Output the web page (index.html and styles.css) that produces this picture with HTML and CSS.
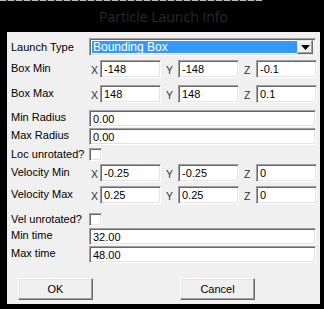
FILE: index.html
```html
<!DOCTYPE html>
<html>
<head>
<meta charset="utf-8">
<link rel="stylesheet" href="styles.css">
</head>
<body>
<div class="screen">
  <div class="topline"></div>
  <div class="title">Particle Launch Info</div>
  <div class="dialog">
    <div class="row r-launch">
      <span class="label">Launch Type</span>
      <div class="combo">
        <span class="combo-sel">Bounding Box</span>
        <span class="combo-btn"><svg width="9" height="5" viewBox="0 0 9 5"><path d="M0 0H9L4.5 5Z" fill="#000"/></svg></span>
      </div>
    </div>
    <div class="row r-boxmin">
      <span class="label">Box Min</span>
      <span class="axis">X</span><span class="field small">-148</span>
      <span class="axis ay">Y</span><span class="field small">-148</span>
      <span class="axis az">Z</span><span class="field small">-0.1</span>
    </div>
    <div class="row r-boxmax">
      <span class="label">Box Max</span>
      <span class="axis">X</span><span class="field small">148</span>
      <span class="axis ay">Y</span><span class="field small">148</span>
      <span class="axis az">Z</span><span class="field small">0.1</span>
    </div>
    <div class="row r-minrad">
      <span class="label">Min Radius</span><span class="field wide">0.00</span>
    </div>
    <div class="row r-maxrad">
      <span class="label">Max Radius</span><span class="field wide">0.00</span>
    </div>
    <div class="row r-loc">
      <span class="label">Loc unrotated?</span><span class="check"></span>
    </div>
    <div class="row r-velmin">
      <span class="label">Velocity Min</span>
      <span class="axis">X</span><span class="field small">-0.25</span>
      <span class="axis ay">Y</span><span class="field small">-0.25</span>
      <span class="axis az">Z</span><span class="field small">0</span>
    </div>
    <div class="row r-velmax">
      <span class="label">Velocity Max</span>
      <span class="axis">X</span><span class="field small">0.25</span>
      <span class="axis ay">Y</span><span class="field small">0.25</span>
      <span class="axis az">Z</span><span class="field small">0</span>
    </div>
    <div class="row r-vel">
      <span class="label">Vel unrotated?</span><span class="check"></span>
    </div>
    <div class="row r-mintime">
      <span class="label">Min time</span><span class="field wide">32.00</span>
    </div>
    <div class="row r-maxtime">
      <span class="label">Max time</span><span class="field wide">48.00</span>
    </div>
    <div class="row r-buttons">
      <span class="btn">OK</span>
      <span class="btn">Cancel</span>
    </div>
  </div>
</div>
</body>
</html>
```
FILE: styles.css
```css
html, body {
  margin: 0;
  padding: 0;
  background: #000;
}
.screen {
  width: 324px;
  height: 309px;
  background: #000;
  position: relative;
  overflow: hidden;
  font-family: "Liberation Sans", Arial, sans-serif;
  font-size: 11px;
  color: #000;
}
.topline {
  height: 1px;
  width: 262px;
  background: repeating-linear-gradient(90deg, #bdbdbd 0 6px, #333 6px 8px);
}
.title {
  height: 31px;
  line-height: 31px;
  text-align: center;
  font-family: "Open Sans", "Noto Sans", sans-serif;
  font-size: 14px;
  color: #2a2a2a;
  padding-left: 3px;
}
.dialog {
  margin-left: 7px;
  width: 313px;
  height: 272px;
  background: #f0f0f0;
  box-sizing: border-box;
  padding: 6px 0 0 4px;
  display: flex;
  flex-direction: column;
}
.row {
  display: flex;
  align-items: flex-start;
  height: 18px;
}
.label {
  width: 78px;
  flex: none;
  line-height: 13px;
  padding-top: 2px;
  white-space: nowrap;
}
.r-launch .label { padding-top: 3px; }
.r-boxmin { margin-top: 4px; }
.r-boxmax { margin-top: 7px; }
.r-minrad { margin-top: 7px; height: 17px; }
.r-maxrad { margin-top: 1px; height: 17px; }
.r-loc { margin-top: 3px; height: 13px; }
.r-velmin { margin-top: 3px; }
.r-velmax { margin-top: 4px; }
.r-vel { margin-top: 9px; height: 13px; }
.r-mintime { margin-top: 2px; height: 17px; }
.r-maxtime { margin-top: 1px; height: 17px; }
.r-buttons { margin-top: 15px; height: 22px; padding-left: 7px; gap: 87px; }

.r-loc .label, .r-vel .label { padding-top: 0; }
.r-minrad .label, .r-maxrad .label, .r-mintime .label, .r-maxtime .label { padding-top: 1px; }

.axis {
  box-sizing: border-box;
  width: 11px;
  flex: none;
  padding-left: 2px;
  line-height: 13px;
  padding-top: 4px;
  color: #333;
  font-size: 10.5px;
}
.axis.ay, .axis.az { width: 17px; padding-left: 5px; }

.field {
  box-sizing: border-box;
  background: #fff;
  border: 1px solid;
  border-color: #a0a0a0 #fff #fff #a0a0a0;
  box-shadow: inset 1px 1px 0 #696969, inset -1px -1px 0 #e3e3e3;
  padding: 2px 0 0 3px;
  line-height: 13px;
  white-space: nowrap;
  flex: none;
}
.field.small { width: 61px; height: 18px; }
.field.wide { width: 227px; height: 17px; padding-top: 2px; }

.check {
  width: 13px;
  height: 13px;
  box-sizing: border-box;
  background: #fff;
  border: 1px solid;
  border-color: #a0a0a0 #fff #fff #a0a0a0;
  box-shadow: inset 1px 1px 0 #696969, inset -1px -1px 0 #e3e3e3;
  flex: none;
}

.combo {
  width: 227px;
  height: 18px;
  box-sizing: border-box;
  background: #fff;
  border: 1px solid;
  border-color: #a0a0a0 #fff #fff #a0a0a0;
  box-shadow: inset 1px 1px 0 #696969, inset -1px -1px 0 #e3e3e3;
  display: flex;
  padding: 2px 2px 2px 2px;
  flex: none;
}
.combo-sel {
  flex: 1;
  background: #3399ff;
  color: #fff;
  font-size: 12px;
  line-height: 13px;
  padding-left: 1px;
}
.combo-btn {
  width: 16px;
  flex: none;
  box-sizing: border-box;
  background: #f0f0f0;
  border: 1px solid;
  border-color: #e3e3e3 #696969 #696969 #e3e3e3;
  box-shadow: inset -1px -1px 0 #a0a0a0, inset 1px 1px 0 #fff;
  margin-top: -1px;
  margin-bottom: -1px;
  display: flex;
  align-items: center;
  justify-content: center;
}
.btn {
  width: 75px;
  height: 22px;
  box-sizing: border-box;
  background: #f0f0f0;
  border: 1px solid;
  border-color: #fff #696969 #696969 #fff;
  box-shadow: inset -1px -1px 0 #a0a0a0, inset 1px 1px 0 #e3e3e3;
  display: flex;
  align-items: center;
  justify-content: center;
  line-height: 13px;
  flex: none;
}
```
